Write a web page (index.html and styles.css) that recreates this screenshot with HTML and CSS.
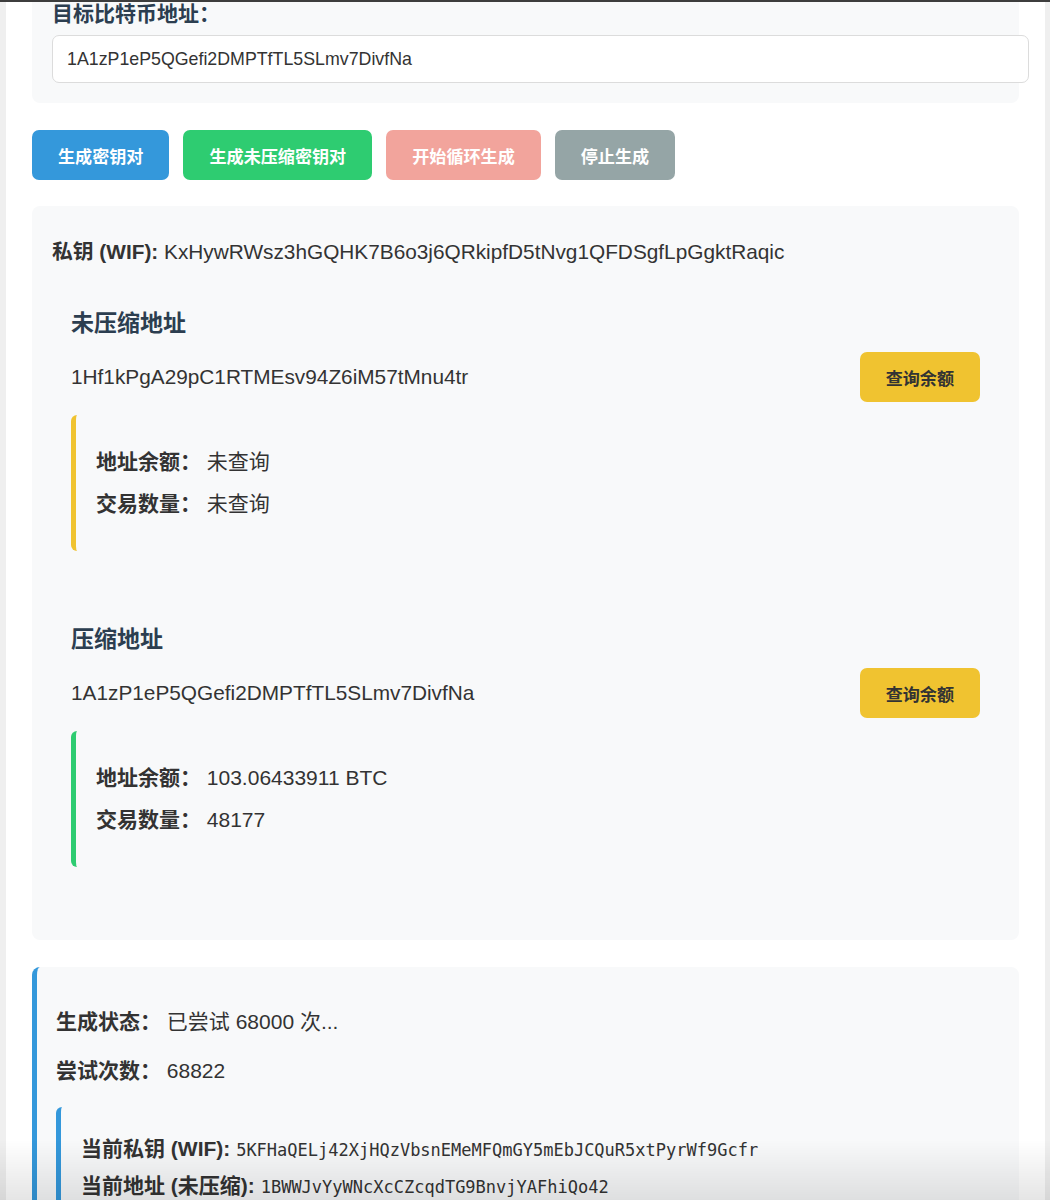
FILE: index.html
```html
<!DOCTYPE html>
<html lang="zh-CN">
<head>
    <meta charset="UTF-8">
    <meta name="viewport" content="width=device-width, initial-scale=1.0">
    <title>比特币密钥对生成器</title>
    <link rel="stylesheet" href="styles.css">
</head>
<body>

<div class="topline"></div>

<div class="page">
    <div class="panel target-panel">
        <label class="field-label" for="targetAddress">目标比特币地址：</label>
        <input id="targetAddress" class="address-input" type="text" value="1A1zP1eP5QGefi2DMPTfTL5SLmv7DivfNa">
    </div>

    <div class="actions">
        <button class="btn btn-blue">生成密钥对</button>
        <button class="btn btn-green">生成未压缩密钥对</button>
        <button class="btn btn-red" disabled>开始循环生成</button>
        <button class="btn btn-gray">停止生成</button>
    </div>

    <div class="panel result-panel">
        <p class="key-line"><strong>私钥 (WIF):</strong> KxHywRWsz3hGQHK7B6o3j6QRkipfD5tNvg1QFDSgfLpGgktRaqic</p>

        <div class="address-section">
            <h3>未压缩地址</h3>
            <div class="address-row">
                <span class="address">1Hf1kPgA29pC1RTMEsv94Z6iM57tMnu4tr</span>
                <button class="btn btn-yellow">查询余额</button>
            </div>
            <div class="balance-box pending">
                <p><strong>地址余额：</strong> 未查询</p>
                <p><strong>交易数量：</strong> 未查询</p>
            </div>
        </div>

        <div class="address-section">
            <h3>压缩地址</h3>
            <div class="address-row">
                <span class="address">1A1zP1eP5QGefi2DMPTfTL5SLmv7DivfNa</span>
                <button class="btn btn-yellow">查询余额</button>
            </div>
            <div class="balance-box found">
                <p><strong>地址余额：</strong> 103.06433911 BTC</p>
                <p><strong>交易数量：</strong> 48177</p>
            </div>
        </div>
    </div>

    <div class="panel status-panel">
        <p><strong>生成状态：</strong> 已尝试 68000 次...</p>
        <p><strong>尝试次数：</strong> 68822</p>
        <div class="current-box">
            <p><strong>当前私钥 (WIF):</strong> <code>5KFHaQELj42XjHQzVbsnEMeMFQmGY5mEbJCQuR5xtPyrWf9Gcfr</code></p>
            <p><strong>当前地址 (未压缩):</strong> <code>1BWWJvYyWNcXcCZcqdTG9BnvjYAFhiQo42</code></p>
        </div>
    </div>
</div>

<div class="bottom-fade"></div>

</body>
</html>
```

FILE: styles.css
```css
body {
    font-family: 'Liberation Sans', 'Noto Sans CJK SC', sans-serif;
    background-color: #efefef;
    color: #333;
    margin: 0;
    padding: 0;
    height: 1200px;
    overflow: hidden; /* page is shown scrolled down a little */
}

/* dark edge of the window along the top */
.topline {
    position: fixed;
    top: 0;
    left: 0;
    right: 0;
    height: 2px;
    background-color: #3d3d3d;
    z-index: 5;
}

.page {
    background-color: white;
    margin: -22px 5px 0 6px;
    padding: 0 26px 40px 26px;
    min-height: 1300px;
}

.panel {
    background-color: #f8f9fa;
    border-radius: 8px;
    padding: 20px;
}

/* Target address */
.field-label {
    display: block;
    font-size: 21px;
    font-weight: bold;
    line-height: 32px;
    color: #2c3e50;
    margin-bottom: 5px;
}

.address-input {
    display: block;
    width: 100%; /* content-box: runs past the panel, as in the original */
    font-family: inherit;
    font-size: 17.8px;
    line-height: 20px;
    color: #333;
    padding: 13px 14px;
    border: 1px solid #dcdcdc;
    border-radius: 7px;
    background-color: white;
    outline: none;
}

/* Buttons */
.actions {
    display: flex;
    gap: 14px;
    margin: 27px 0 26px 0;
}

.btn {
    font-family: inherit;
    font-size: 17.1px;
    font-weight: bold;
    color: white;
    height: 50px;
    padding: 0 26px;
    border: none;
    border-radius: 7px;
    cursor: pointer;
}

.btn-blue { background-color: #3498db; }
.btn-green { background-color: #2ecc71; }
.btn-gray { background-color: #95a5a6; }

.btn-red {
    background-color: #e74c3c;
    opacity: 0.5; /* disabled while nothing to loop */
    cursor: default;
}

.btn-yellow {
    background-color: #f0c330;
    color: #333;
    flex-shrink: 0;
}

/* Result */
.key-line {
    font-size: 20.8px;
    line-height: 32px;
    margin: 10px 0;
}

.address-section {
    padding: 19px;
    margin: 20px 0 34px 0;
}

.address-section h3 {
    font-size: 23px;
    line-height: 32px;
    color: #2c3e50;
    margin: 0 0 13px 0;
}

.address-row {
    display: flex;
    justify-content: space-between;
    align-items: center;
    font-size: 20.8px;
}

.balance-box {
    margin-top: 13px;
    padding: 21px 24px 21px 20px;
    border-left: 5px solid #f0c330;
    border-radius: 6px;
    font-size: 21px;
}

.balance-box p {
    line-height: 32px;
    margin: 10px 0;
}

.balance-box.found {
    border-left-color: #2ecc71;
}

/* Status */
.status-panel {
    margin-top: 27px;
    border-left: 5px solid #3498db;
    padding: 22px 20px 20px 19px;
    font-size: 21px;
}

.status-panel p {
    line-height: 32px;
    margin: 17px 0;
}

.current-box {
    margin-top: 20px;
    border-left: 5px solid #3498db;
    border-radius: 6px;
    padding: 22px 20px 20px 20px;
}

.current-box p {
    margin: 4px 0;
}

.current-box code {
    font-family: 'DejaVu Sans Mono', 'Liberation Mono', monospace;
    font-size: 17px;
}

/* shadow creeping in at the bottom of the window */
.bottom-fade {
    position: fixed;
    left: 0;
    right: 0;
    bottom: 0;
    height: 60px;
    background: linear-gradient(rgba(0, 0, 0, 0), rgba(0, 0, 0, 0.1));
    pointer-events: none;
}
```
